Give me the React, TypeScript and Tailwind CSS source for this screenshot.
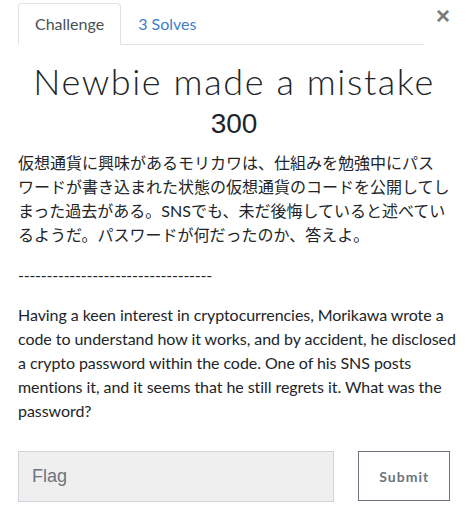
import { useState } from 'react';

// \u2060 keeps ワ and ー together so the line breaks before ワ
const jaText =
  '仮想通貨に興味があるモリカワは、仕組みを勉強中にパスワ\u2060ードが書き込まれた状態の仮想通貨のコードを公開してしまった過去がある。SNSでも、未だ後悔していると述べているようだ。パスワードが何だったのか、答えよ。';

const enText =
  'Having a keen interest in cryptocurrencies, Morikawa wrote a code to understand how it works, and by accident, he disclosed a crypto password within the code. One of his SNS posts mentions it, and it seems that he still regrets it. What was the password?';

export default function App() {
  const [tab, setTab] = useState<'challenge' | 'solves'>('challenge');
  const [flag, setFlag] = useState('');

  return (
    <div className="w-[467px] min-h-[522px] bg-white pr-[17px] pl-[18px] pt-[3px] font-['Lato','Noto_Sans_CJK_JP',sans-serif] text-[#212529]">
      {/* Tabs + close */}
      <div className="flex items-start">
        <ul className="flex flex-1 border-b border-[#dee2e6] mr-[12px]">
          <li className="-mb-px">
            <button
              onClick={() => setTab('challenge')}
              className={
                tab === 'challenge'
                  ? 'h-[42px] px-[16px] text-[16px] text-[#495057] bg-white border border-[#dee2e6] border-b-white rounded-t-[4px]'
                  : 'h-[42px] px-[16px] text-[16px] text-[#3c80c6] border border-transparent'
              }
            >
              Challenge
            </button>
          </li>
          <li className="-mb-px">
            <button
              onClick={() => setTab('solves')}
              className={
                tab === 'solves'
                  ? 'h-[42px] px-[16px] text-[16px] text-[#495057] bg-white border border-[#dee2e6] border-b-white rounded-t-[4px]'
                  : 'h-[42px] px-[16px] text-[16px] text-[#3c80c6] border border-transparent'
              }
            >
              3 Solves
            </button>
          </li>
        </ul>
        <button className="mt-[1px] leading-none text-[24px] font-bold text-[#7a7a7a] font-['Liberation_Sans',sans-serif]">
          ×
        </button>
      </div>

      {/* Title */}
      <h2 className="mt-[15px] text-center text-[36px] leading-[42px] font-light tracking-[1.6px] font-['Lato',sans-serif]">
        Newbie made a mistake
      </h2>
      <h3 className="mt-[5px] text-center text-[28px] leading-[34px] font-['Liberation_Sans',sans-serif]">300</h3>

      {/* Description */}
      <div className="mt-[10px] text-[16px] leading-[24px]">
        <p lang="ja" className="[line-break:strict]">{jaText}</p>
        <p className="mt-[16px] tracking-[-0.24px]">----------------------------------</p>
        <p className="mt-[16px] -mr-[10px] tracking-[-0.06px]">{enText}</p>
      </div>

      {/* Flag form */}
      <div className="mt-[28px] flex items-start">
        <input
          value={flag}
          onChange={(e) => setFlag(e.target.value)}
          placeholder="Flag"
          className="w-[318px] h-[51px] bg-[#efefef] border border-[#ced4da] px-[13px] text-[18px] text-[#495057] placeholder:text-[#6c757d] font-['Liberation_Sans',sans-serif] outline-none"
        />
        <button className="ml-[24px] w-[92px] h-[50px] border border-[#6c757d] text-[14px] font-bold tracking-[1px] text-[#6c757d]">
          Submit
        </button>
      </div>
    </div>
  );
}
